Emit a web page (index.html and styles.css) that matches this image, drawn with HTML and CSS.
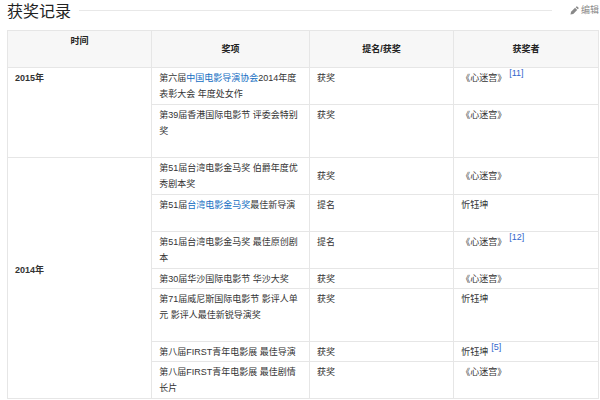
FILE: index.html
```html
<!DOCTYPE html>
<html lang="zh-CN">
<head>
<meta charset="utf-8">
<title>获奖记录</title>
<link rel="stylesheet" href="styles.css">
</head>
<body>
<header class="section-head">
  <h2>获奖记录</h2>
  <span class="rule"></span>
  <a class="edit" href="#edit">
    <svg viewBox="0 0 10 10" aria-hidden="true"><path d="M0.5 9.5 1.2 6.4 5.6 2 8 4.4 3.6 8.8Z"/><path d="M6.3 1.3 7.2 0.5Q7.6 0.2 8 0.5L9.5 2Q9.8 2.4 9.5 2.8L8.7 3.7Z"/></svg>
    <span>编辑</span>
  </a>
</header>
<main>
<table class="awards">
  <colgroup><col class="c-time"><col class="c-award"><col class="c-result"><col class="c-person"></colgroup>
  <thead>
    <tr><th class="lifted" scope="col">时间</th><th scope="col">奖项</th><th scope="col">提名/获奖</th><th scope="col">获奖者</th></tr>
  </thead>
  <tbody>
    <tr class="two"><th class="year" scope="rowgroup" rowspan="2">2015年</th><td>第六届<a href="#guild">中国电影导演协会</a>2014年度表彰大会 年度处女作</td><td>获奖</td><td>《心迷宫》<sup><a href="#r11">[11]</a></sup></td></tr>
    <tr class="three"><td>第39届香港国际电影节 评委会特别奖</td><td>获奖</td><td>《心迷宫》</td></tr>
  </tbody>
  <tbody>
    <tr class="two middle"><th class="year lifted" scope="rowgroup" rowspan="7">2014年</th><td>第51届台湾电影金马奖 伯爵年度优秀剧本奖</td><td>获奖</td><td>《心迷宫》</td></tr>
    <tr class="two"><td>第51届<a href="#horse">台湾电影金马奖</a>最佳新导演</td><td>提名</td><td>忻钰坤</td></tr>
    <tr class="two"><td>第51届台湾电影金马奖 最佳原创剧本</td><td>提名</td><td>《心迷宫》<sup><a href="#r12">[12]</a></sup></td></tr>
    <tr class="one"><td>第30届华沙国际电影节 华沙大奖</td><td>获奖</td><td>《心迷宫》</td></tr>
    <tr class="three"><td>第71届威尼斯国际电影节 影评人单元 影评人最佳新锐导演奖</td><td>获奖</td><td>忻钰坤</td></tr>
    <tr class="one"><td>第八届FIRST青年电影展 最佳导演</td><td>获奖</td><td>忻钰坤<sup><a href="#r5">[5]</a></sup></td></tr>
    <tr class="two"><td>第八届FIRST青年电影展 最佳剧情长片</td><td>获奖</td><td>《心迷宫》</td></tr>
  </tbody>
</table>
</main>
</body>
</html>
```
FILE: styles.css
```css
body {
  margin: 0;
  padding: 0 1px 0 7px;
  background: #fff;
  color: #333;
  font: 9px/16px "Liberation Sans", "Noto Sans CJK SC", sans-serif;
}

a {
  color: #136ec2;
  text-decoration: none;
}

.section-head {
  display: flex;
  align-items: center;
  height: 20px;
  margin-bottom: 10px;
}

.section-head h2 {
  margin: 0;
  padding-top: 3px;
  color: #222;
  font-size: 16px;
  font-weight: 400;
  line-height: 20px;
}

.rule {
  flex: 1;
  margin: 0 18px 0 8px;
  border-top: 1px solid #e8e8e8;
}

.edit {
  display: flex;
  align-items: center;
  gap: 2px;
  color: #888;
}

.edit svg {
  width: 9px;
  height: 9px;
  fill: #888;
}

.awards {
  width: 100%;
  table-layout: fixed;
  border-collapse: collapse;
}

.c-time,
.c-result {
  width: 24.4%;
}

.c-award {
  width: 26.7%;
}

th,
td {
  box-sizing: border-box;
  padding: 2px 7px;
  border: 1px solid #e6e6e6;
  vertical-align: top;
}

td {
  text-align: left;
}

thead th {
  background: #f7f7f7;
  color: #222;
  text-align: center;
  vertical-align: middle;
}

.one td {
  padding-bottom: 1px;
}

.two {
  height: 37px;
}

.three {
  height: 53px;
}

.middle td {
  vertical-align: middle;
}

.year {
  text-align: left;
}

.lifted {
  padding-bottom: 18px;
  vertical-align: middle;
}

sup {
  margin-left: 3px;
  font-size: 9px;
  line-height: 0;
  vertical-align: 5px;
}

sup a {
  color: #36c;
}
```
